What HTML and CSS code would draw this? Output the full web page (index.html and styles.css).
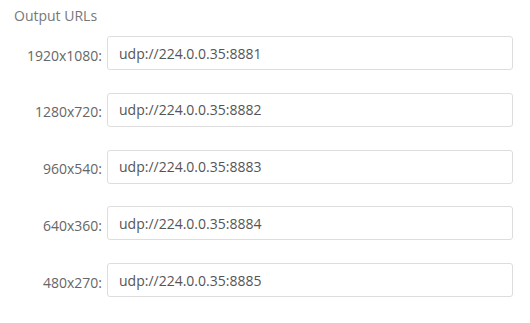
FILE: index.html
```html
<!doctype html>
<html>
<head>
    <title>Output URLs</title>
    <meta charset="utf-8" />
    <link rel="stylesheet" href="styles.css">
</head>
<body>
	<div id="outputDiv">
		<h3 class="sectionTitle">Output URLs</h3>
		<div class="urlRow"><label class="resLabel">1920x1080:</label><input class="urlBox" type="text" value="udp://224.0.0.35:8881"></div>
		<div class="urlRow"><label class="resLabel">1280x720:</label><input class="urlBox" type="text" value="udp://224.0.0.35:8882"></div>
		<div class="urlRow"><label class="resLabel">960x540:</label><input class="urlBox" type="text" value="udp://224.0.0.35:8883"></div>
		<div class="urlRow"><label class="resLabel">640x360:</label><input class="urlBox" type="text" value="udp://224.0.0.35:8884"></div>
		<div class="urlRow"><label class="resLabel">480x270:</label><input class="urlBox" type="text" value="udp://224.0.0.35:8885"></div>
	</div>
</body>
</html>
```

FILE: styles.css
```css
body {
	background-color: #ffffff;
	margin: 0;
	padding: 0;
	font-family: "Open Sans", "Liberation Sans", Arial, sans-serif;
	color: #666666;
}
#outputDiv {
	padding: 6px 17px 0 14px;
}
.sectionTitle {
	margin: 0 0 10px 0;
	font-size: 14px;
	font-weight: normal;
	line-height: 20px;
	color: #777777;
}
.urlRow {
	display: flex;
	align-items: center;
	margin-bottom: 22.75px;
}
.resLabel {
	width: 88px;
	text-align: right;
	padding-right: 5px;
	font-size: 14px;
	color: #666666;
	padding-top: 4px;
}
.urlBox {
	flex: 1;
	box-sizing: border-box;
	height: 34px;
	padding: 0 11px;
	border: 1px solid #dddddd;
	border-radius: 3px;
	font-family: "Open Sans", "Liberation Sans", Arial, sans-serif;
	font-size: 14px;
	color: #555555;
	background-color: #ffffff;
	outline: none;
}
```
